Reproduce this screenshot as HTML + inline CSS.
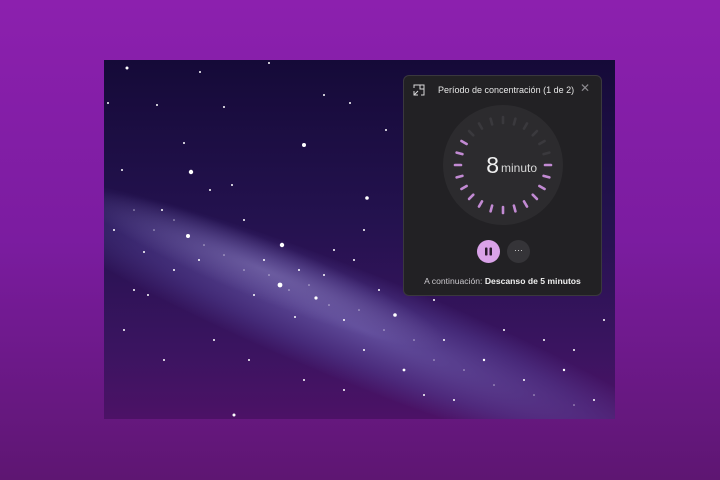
<!DOCTYPE html>
<html><head><meta charset="utf-8"><style>
html,body{margin:0;padding:0;width:720px;height:480px;overflow:hidden}
body{background:linear-gradient(180deg,#8c20ae 0%,#7b1ca0 50%,#5e1672 100%);font-family:"Liberation Sans",sans-serif;position:relative}
#img{position:absolute;left:104px;top:60px;width:511px;height:359px;overflow:hidden;background:linear-gradient(180deg,#150a38 0%,#24124f 45%,#3a1460 80%,#4c1266 100%)}
.band{position:absolute;border-radius:50%}
#panel{position:absolute;left:403px;top:75px;width:199px;height:221px;background:#222124;border:1px solid #3a383d;border-radius:6px;box-sizing:border-box;color:#e8e6ea}
.t{position:absolute;left:34px;top:9px;font-size:9px;color:#e6e6e6;white-space:nowrap}
.x{position:absolute;left:176px;top:5px;font-size:12px;color:#8c8a8f}
.btn{position:absolute;width:23px;height:23px;border-radius:50%}
.foot{position:absolute;left:0;width:100%;top:200px;text-align:center;font-size:8.6px;color:#c9c7cc;white-space:nowrap}
</style></head><body>
<div id="img">
<div class="band" style="left:-120px;top:215px;width:760px;height:110px;background:radial-gradient(ellipse at center,rgba(110,95,175,0.75) 0%,rgba(90,75,160,0.4) 45%,rgba(60,40,120,0) 72%);transform:rotate(22deg)"></div>
<div class="band" style="left:-40px;top:180px;width:400px;height:60px;background:radial-gradient(ellipse at center,rgba(150,140,200,0.45) 0%,rgba(120,110,190,0) 70%);transform:rotate(22deg)"></div>
<svg style="position:absolute;left:0;top:0" width="511" height="359" viewBox="0 0 511 359">
<g fill="#fff">
<circle cx="23" cy="8" r="1.5"/><circle cx="96" cy="12" r="1"/><circle cx="165" cy="3" r="1"/><circle cx="220" cy="35" r="1"/><circle cx="53" cy="45" r="1"/><circle cx="4" cy="43" r="1"/><circle cx="120" cy="47" r="1"/><circle cx="200" cy="85" r="2"/><circle cx="87" cy="112" r="2.2"/><circle cx="263" cy="138" r="1.8"/><circle cx="246" cy="43" r="1"/><circle cx="80" cy="83" r="1"/><circle cx="18" cy="110" r="1"/><circle cx="58" cy="150" r="1"/><circle cx="128" cy="125" r="1"/><circle cx="84" cy="176" r="2"/><circle cx="178" cy="185" r="2.2"/><circle cx="176" cy="225" r="2.4"/><circle cx="212" cy="238" r="1.6"/><circle cx="191" cy="257" r="1"/><circle cx="291" cy="255" r="1.8"/><circle cx="275" cy="230" r="1"/><circle cx="145" cy="300" r="1"/><circle cx="130" cy="355" r="1.5"/><circle cx="44" cy="235" r="1"/><circle cx="40" cy="192" r="1"/><circle cx="30" cy="230" r="1"/><circle cx="106" cy="130" r="1"/><circle cx="140" cy="160" r="1"/><circle cx="220" cy="215" r="1"/><circle cx="240" cy="260" r="1"/><circle cx="260" cy="290" r="1"/><circle cx="300" cy="310" r="1.4"/><circle cx="340" cy="280" r="1"/><circle cx="380" cy="300" r="1.2"/><circle cx="420" cy="320" r="1"/><circle cx="460" cy="310" r="1.2"/><circle cx="490" cy="340" r="1"/><circle cx="350" cy="340" r="1"/><circle cx="60" cy="300" r="1"/><circle cx="20" cy="270" r="1"/><circle cx="110" cy="280" r="1"/><circle cx="160" cy="200" r="1"/><circle cx="195" cy="210" r="1"/><circle cx="150" cy="235" r="1"/><circle cx="230" cy="190" r="1"/><circle cx="250" cy="200" r="1"/><circle cx="95" cy="200" r="1"/><circle cx="70" cy="210" r="1"/><circle cx="10" cy="170" r="1"/><circle cx="260" cy="170" r="1"/><circle cx="282" cy="70" r="1"/><circle cx="310" cy="210" r="1"/><circle cx="330" cy="240" r="1"/><circle cx="400" cy="270" r="1"/><circle cx="440" cy="280" r="1"/><circle cx="470" cy="290" r="1"/><circle cx="500" cy="260" r="1"/><circle cx="320" cy="335" r="1"/><circle cx="200" cy="320" r="1"/><circle cx="240" cy="330" r="1"/></g>
<g fill="#fff" opacity="0.6">
<circle cx="30" cy="150" r="0.8"/><circle cx="50" cy="170" r="0.8"/><circle cx="70" cy="160" r="0.8"/><circle cx="100" cy="185" r="0.8"/><circle cx="120" cy="195" r="0.8"/><circle cx="140" cy="210" r="0.8"/><circle cx="165" cy="215" r="0.8"/><circle cx="185" cy="230" r="0.8"/><circle cx="205" cy="225" r="0.8"/><circle cx="225" cy="245" r="0.8"/><circle cx="255" cy="250" r="0.8"/><circle cx="280" cy="270" r="0.8"/><circle cx="310" cy="280" r="0.8"/><circle cx="330" cy="300" r="0.8"/><circle cx="360" cy="310" r="0.8"/><circle cx="390" cy="325" r="0.8"/><circle cx="430" cy="335" r="0.8"/><circle cx="470" cy="345" r="0.8"/></g>
</svg></div>
<div id="panel">
<svg style="position:absolute;left:9px;top:8px" width="12" height="12" viewBox="0 0 12 12" fill="none" stroke="#d8d8d8" stroke-width="1"><path d="M1 4V1h10v10H8M1 7v4h4M1 11l4-4M7 1v4h4"/></svg>
<div class="t">Período de concentración (1 de 2)</div>
<div class="x">✕</div>
<svg style="position:absolute;left:38px;top:28px" width="122" height="122" viewBox="-61 -61 122 122">
<circle r="60" fill="#2c2b2e"/>
<g stroke-width="2.6" stroke-linecap="round" id="ticks"></g>
<text x="-4" y="8" text-anchor="end" font-size="23" fill="#f0f0f0" font-family="Liberation Sans">8</text>
<text x="-2" y="7" font-size="12" fill="#d8d8d8" font-family="Liberation Sans">minuto</text>
</svg>
<div class="btn" style="left:73px;top:164px;background:#d9a2e8"><svg width="23" height="23"><rect x="8" y="7.5" width="2.5" height="8" rx="0.8" fill="#2a1a2e"/><rect x="12.5" y="7.5" width="2.5" height="8" rx="0.8" fill="#2a1a2e"/></svg></div>
<div class="btn" style="left:103px;top:164px;background:#353438;color:#ddd;font-size:9px;text-align:center;line-height:20px">···</div>
<div class="foot">A continuación: <b style="color:#f0f0f0">Descanso de 5 minutos</b></div>
</div>
<script>
var g=document.getElementById('ticks'),s='';
for(var i=0;i<24;i++){var a=i*15,r=a*Math.PI/180,sx=Math.sin(r),cy=-Math.cos(r);
var p=(a>=90&&a<=300);
s+='<line x1="'+(sx*42).toFixed(2)+'" y1="'+(cy*42).toFixed(2)+'" x2="'+(sx*48).toFixed(2)+'" y2="'+(cy*48).toFixed(2)+'" stroke="'+(p?'#c28ad3':'#3a393d')+'"/>';}
g.innerHTML=s;
</script>
</body></html>
